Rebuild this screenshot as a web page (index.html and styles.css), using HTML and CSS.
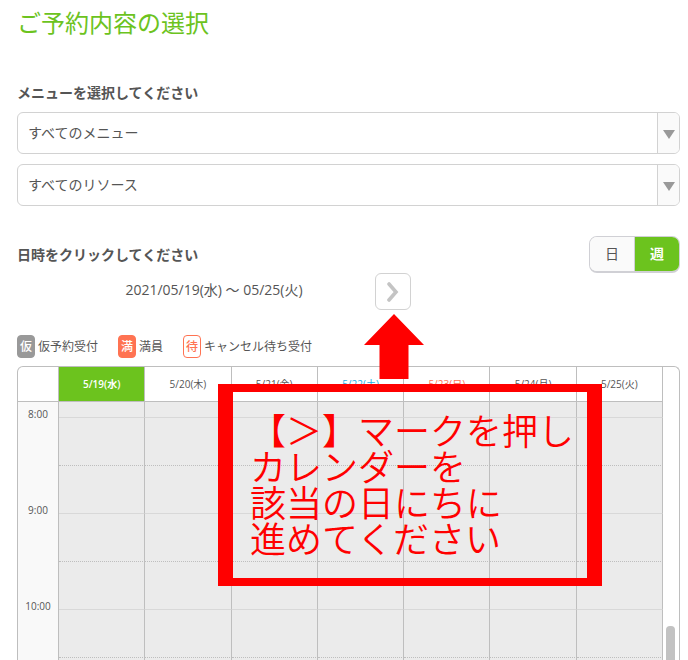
FILE: index.html
```html
<!DOCTYPE html>
<html lang="ja">
<head>
  <meta charset="UTF-8">
  <meta name="viewport" content="width=device-width, initial-scale=1.0">
  <title>ご予約内容の選択</title>
  <link rel="stylesheet" href="styles.css">
</head>
<body>
  <h1>ご予約内容の選択</h1>

  <!-- メニュー選択 -->
  <form class="menu-form">
    <label class="section-label" for="menu">メニューを選択してください</label>
    <div class="select-box">
      <select id="menu">
        <option>すべてのメニュー</option>
      </select>
    </div>
    <div class="select-box">
      <select id="resource" aria-label="リソース">
        <option>すべてのリソース</option>
      </select>
    </div>
  </form>

  <!-- 日時選択 -->
  <div class="date-header">
    <h2 class="section-label">日時をクリックしてください</h2>
    <div class="view-switch">
      <button type="button">日</button>
      <button type="button" class="active">週</button>
    </div>
  </div>
  <div class="date-nav">
    <span class="date-range">2021/05/19(水) ～ 05/25(火)</span>
    <button type="button" class="next" aria-label="次の週">
      <svg width="12" height="20" viewBox="0 0 12 20"><path d="M2 2L9 10L2 18" fill="none" stroke="#c4c4c4" stroke-width="3.6" stroke-linecap="round" stroke-linejoin="miter"/></svg>
    </button>
    <svg class="arrow" width="60" height="65" viewBox="0 0 60 65"><path d="M30 0L60 31H44.500V65H15.500V31H0Z" fill="#f00"/></svg>
  </div>

  <ul class="legend">
    <li><span class="badge tentative">仮</span>仮予約受付</li>
    <li><span class="badge full">満</span>満員</li>
    <li><span class="badge waiting">待</span>キャンセル待ち受付</li>
  </ul>

  <!-- カレンダー -->
  <div class="calendar-area">
    <div class="calendar">
      <table>
        <thead>
          <tr>
            <td class="corner"></td>
            <th class="today">5/19(水)</th>
            <th>5/20(木)</th>
            <th>5/21(金)</th>
            <th class="sat">5/22(土)</th>
            <th class="sun">5/23(日)</th>
            <th>5/24(月)</th>
            <th>5/25(火)</th>
          </tr>
        </thead>
        <tbody>
          <tr class="first">
            <th class="time" rowspan="2">8:00</th>
            <td></td><td></td><td></td><td></td><td></td><td></td><td></td>
          </tr>
          <tr class="half"><td></td><td></td><td></td><td></td><td></td><td></td><td></td></tr>
          <tr>
            <th class="time" rowspan="2">9:00</th>
            <td></td><td></td><td></td><td></td><td></td><td></td><td></td>
          </tr>
          <tr class="half"><td></td><td></td><td></td><td></td><td></td><td></td><td></td></tr>
          <tr>
            <th class="time" rowspan="2">10:00</th>
            <td></td><td></td><td></td><td></td><td></td><td></td><td></td>
          </tr>
          <tr class="half"><td></td><td></td><td></td><td></td><td></td><td></td><td></td></tr>
          <tr>
            <th class="time"></th>
            <td></td><td></td><td></td><td></td><td></td><td></td><td></td>
          </tr>
        </tbody>
      </table>
      <div class="scroll-thumb"></div>
    </div>
    <p class="callout">【＞】マークを押し<br>カレンダーを<br>該当の日にちに<br>進めてください</p>
  </div>
</body>
</html>
```
FILE: styles.css
```css
* {
  box-sizing: border-box;
}
body {
  display: flex;
  flex-direction: column;
  height: 100vh;
  margin: 0;
  padding: 11px 8px 0 17px;
  overflow: hidden;
  background-color: #fff;
  color: #555;
  font-family: "Open Sans", "Noto Sans CJK JP", sans-serif;
  font-size: 14px;
  line-height: 20px;
}
h1 {
  margin: 0 0 48px;
  color: #6cc31e;
  font-size: 24px;
  font-weight: 400;
  line-height: 24px;
}
.section-label {
  display: block;
  margin: 0;
  font-size: 14px;
  font-weight: 600;
  line-height: 20px;
}
button, select {
  font: inherit;
  color: inherit;
}

/* メニュー選択 */
.menu-form {
  display: flex;
  flex-direction: column;
  gap: 10px;
  margin-bottom: 30px;
}
.menu-form .section-label {
  margin-bottom: -1px;
}
.select-box {
  position: relative;
}
.select-box::before {
  content: "";
  position: absolute;
  top: 1px;
  right: 1px;
  bottom: 1px;
  width: 21px;
  border-left: 1px solid #d2d2d2;
  border-radius: 0 5px 5px 0;
  background-color: #fafafa;
  pointer-events: none;
}
.select-box::after {
  content: "";
  position: absolute;
  top: 18px;
  right: 5px;
  border-top: 9px solid #999;
  border-left: 6px solid transparent;
  border-right: 6px solid transparent;
  pointer-events: none;
}
select {
  display: block;
  appearance: none;
  width: 100%;
  height: 42px;
  padding: 0 30px 0 10px;
  border: 1px solid #d2d2d2;
  border-radius: 6px;
  background-color: #fff;
}

/* 日時選択 */
.date-header {
  display: flex;
  justify-content: space-between;
  align-items: center;
}
.view-switch {
  display: flex;
  overflow: hidden;
  height: 37px;
  border: 1px solid #d0d0d5;
  border-bottom-width: 2px;
  border-radius: 8px;
}
.view-switch button {
  width: 45px;
  padding: 0;
  border: 0;
  border-right: 1px solid #d0d0d5;
  background-color: #fafafa;
}
.view-switch .active {
  width: 44px;
  border-right: 0;
  background-color: #6cc31e;
  color: #fff;
  font-weight: 700;
}
.date-nav {
  display: grid;
  grid-template-columns: 1fr 36px;
  position: relative;
  width: 394px;
  padding-left: 36px;
}
.date-range {
  line-height: 34px;
  text-align: center;
}
.next {
  display: flex;
  justify-content: center;
  align-items: center;
  height: 37px;
  padding: 0;
  border: 1px solid #d2d2d2;
  border-radius: 6px;
  background-color: #fff;
}
.arrow {
  position: absolute;
  top: 41px;
  right: -13px;
  z-index: 2;
}
.legend {
  display: flex;
  gap: 20px;
  margin: 25px 0 8px;
  padding: 0;
  list-style: none;
  font-size: 12px;
}
.legend li {
  display: flex;
  align-items: center;
  gap: 3px;
}
.badge {
  width: 18px;
  height: 23px;
  border: 1px solid #ff7352;
  border-radius: 4px;
  font-weight: 500;
  line-height: 21px;
  text-align: center;
}
.tentative {
  border-color: #999;
  background-color: #999;
  color: #fff;
}
.full {
  background-color: #ff7352;
  color: #fff;
}
.waiting {
  color: #ff7352;
}

/* カレンダー */
.calendar-area {
  flex: 1;
  position: relative;
  min-height: 0;
}
.calendar {
  position: relative;
  height: 100%;
  padding-right: 16px;
  overflow: hidden;
  border: 1px solid #bebebe;
  border-bottom: 0;
  border-radius: 6px 6px 0 0;
}
table {
  width: 100%;
  table-layout: fixed;
  border-collapse: separate;
  border-spacing: 0;
  font-size: 10px;
  line-height: 12px;
}
th, td {
  padding: 0;
  border-right: 1px solid #bebebe;
  font-weight: 400;
}
thead th, thead td {
  height: 35px;
  border-bottom: 1px solid #bebebe;
}
.corner {
  width: 41px;
}
thead .today {
  background-color: #6cc31e;
  color: #fff;
  font-weight: 600;
}
.sat {
  color: #1eaee5;
}
.sun {
  color: #ff7352;
}
tbody td {
  height: 48px;
  border-bottom: 1px solid #d8d8d8;
  background-color: #ebebeb;
}
.first td {
  height: 16px;
}
.half td {
  border-bottom: 1px dotted #bebebe;
}
.time {
  padding-bottom: 46px;
  background-color: #f9f9f9;
  vertical-align: bottom;
}
.scroll-thumb {
  position: absolute;
  top: 259px;
  right: 4px;
  bottom: 0;
  width: 9px;
  border-radius: 4px 4px 0 0;
  background-color: #c2c2c2;
}
.callout {
  position: absolute;
  top: 18px;
  left: 201px;
  width: 384px;
  margin: 0;
  padding: 19px 0 23px 17px;
  border: solid #f00;
  border-width: 8px 15px;
  color: #f00;
  font-family: "Noto Sans CJK JP", sans-serif;
  font-size: 36px;
  font-weight: 350;
  line-height: 36px;
  white-space: nowrap;
}
```
